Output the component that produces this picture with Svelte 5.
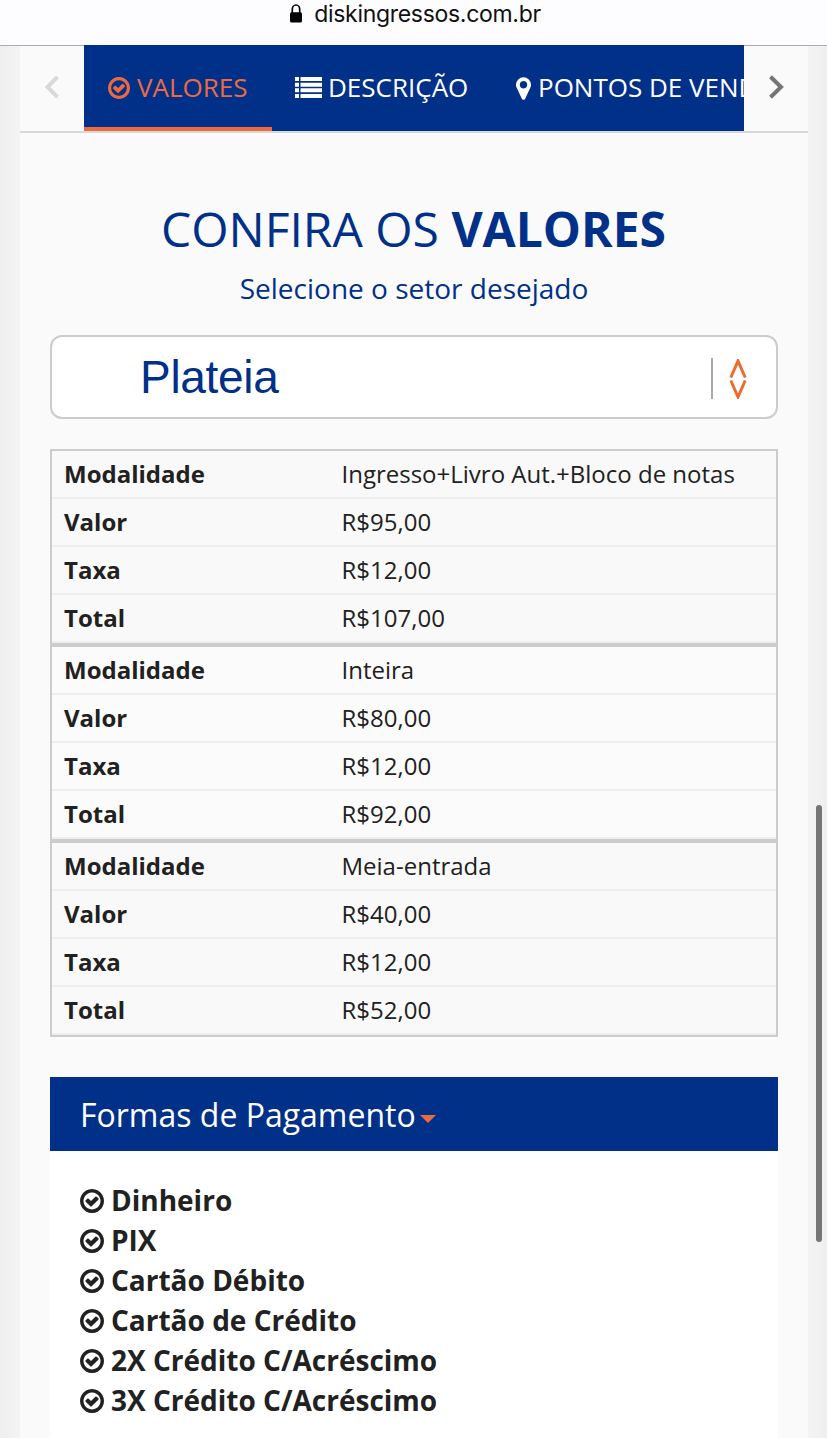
<script lang="ts">
  type Ticket = { modalidade: string; valor: string; taxa: string; total: string };

  const TICKETS: Ticket[] = [
    { modalidade: "Ingresso+Livro Aut.+Bloco de notas", valor: "R$95,00", taxa: "R$12,00", total: "R$107,00" },
    { modalidade: "Inteira", valor: "R$80,00", taxa: "R$12,00", total: "R$92,00" },
    { modalidade: "Meia-entrada", valor: "R$40,00", taxa: "R$12,00", total: "R$52,00" },
  ];

  const PAYMENTS = [
    "Dinheiro",
    "PIX",
    "Cartão Débito",
    "Cartão de Crédito",
    "2X Crédito C/Acréscimo",
    "3X Crédito C/Acréscimo",
  ];

  const rowsOf = (t: Ticket) => [
    { label: "Modalidade", value: t.modalidade },
    { label: "Valor", value: t.valor },
    { label: "Taxa", value: t.taxa },
    { label: "Total", value: t.total },
  ];
</script>

{#snippet check()}
  <svg class="check" viewBox="128 128 1536 1536" aria-hidden="true">
    <path
      d="M1299 813l-422 422q-19 19-45 19t-45-19l-294-294q-19-19-19-45t19-45l102-102q19-19 45-19t45 19l147 147 275-275q19-19 45-19t45 19l102 102q19 19 19 45t-19 45zm141 83q0-148-73-273t-198-198-273-73-273 73-198 198-73 273 73 273 198 198 273 73 273-73 198-198 73-273zm224 0q0 209-103 385.5t-279.5 279.5-385.5 103-385.5-103-279.5-279.5-103-385.5 103-385.5 279.5-279.5 385.5-103 385.5 103 279.5 279.5 103 385.5z"
    />
  </svg>
{/snippet}

<div class="screen">
  <header class="address">
    <svg width="12" height="19" viewBox="0 0 12 19" aria-hidden="true">
      <path d="M2.3 9V5.2a3.7 4.2 0 0 1 7.4 0V9" fill="none" stroke="#050505" stroke-width="1.7" />
      <rect x="0" y="8.2" width="12" height="10.3" rx="1.5" fill="#050505" />
    </svg>
    <span>diskingressos.com.br</span>
  </header>

  <main class="page">
    <nav class="tabs">
      <button class="arrow disabled" aria-label="Anterior">
        <svg width="16" height="26" viewBox="0 0 16 26"><path d="M13.5 2.8 L3.5 13 L13.5 23.2" /></svg>
      </button>
      <div class="strip">
        <a class="tab active" href="#valores">{@render check()}<span>VALORES</span></a>
        <a class="tab descricao" href="#descricao">
          <svg class="list" width="27" height="21" viewBox="0 0 27 21" aria-hidden="true">
            <path d="M0 0h4v4H0zM5.5 0H27v4H5.5zM0 5.7h4v4H0zM5.5 5.7H27v4H5.5zM0 11.3h4v4H0zM5.5 11.3H27v4H5.5zM0 17h4v4H0zM5.5 17H27v4H5.5z" />
          </svg>
          <span>DESCRIÇÃO</span>
        </a>
        <a class="tab pontos" href="#pontos">
          <svg width="15" height="23" viewBox="0 0 1024 1536" aria-hidden="true">
            <path d="M768 512q0-106-75-181t-181-75-181 75-75 181 75 181 181 75 181-75 75-181zm256 0q0 109-33 179l-364 774q-16 33-47.5 52t-67.5 19-67.5-19-46.5-52l-365-774q-33-70-33-179 0-212 150-362t362-150 362 150 150 362z" />
          </svg>
          <span>PONTOS DE VENDA</span>
        </a>
      </div>
      <button class="arrow" aria-label="Próximo">
        <svg width="16" height="26" viewBox="0 0 16 26"><path d="M2.5 2.8 L13 13 L2.5 23.2" /></svg>
      </button>
    </nav>

    <h2><span>CONFIRA OS</span> <strong>VALORES</strong></h2>
    <p class="subtitle"><span>Selecione o setor desejado</span></p>

    <div class="select">
      <span class="selected">Plateia</span>
      <span class="divider"></span>
      <svg width="18" height="40" viewBox="0 0 18 40" aria-hidden="true">
        <path d="M1.8 18.5L9 2L16.2 18.5M1.8 21.5L9 38L16.2 21.5" />
      </svg>
    </div>

    <div class="tickets">
      {#each TICKETS as ticket (ticket.modalidade)}
        <dl class="ticket">
          {#each rowsOf(ticket) as row (row.label)}
            <div class="row">
              <dt>{row.label}</dt>
              <dd>{row.value}</dd>
            </div>
          {/each}
        </dl>
      {/each}
    </div>

    <section class="payment">
      <h3><span>Formas de Pagamento</span><i class="caret"></i></h3>
      <ul>
        {#each PAYMENTS as payment (payment)}
          <li>{@render check()}<span>{payment}</span></li>
        {/each}
      </ul>
    </section>
  </main>
  <div class="scrollbar"></div>
</div>

<style>
  :global(body) {
    background: #fafafa;
  }

  .screen {
    position: relative;
    box-sizing: border-box;
    width: 827px;
    height: 1438px;
    overflow: hidden;
    font-family: "Open Sans", sans-serif;
    color: #212121;
    background: linear-gradient(90deg, #efefef 0, #f4f4f4 20px, #f4f4f4 808px, #efefef 827px);
  }

  .address {
    box-sizing: border-box;
    display: flex;
    justify-content: center;
    align-items: flex-start;
    gap: 12px;
    height: 46px;
    padding-top: 4px;
    padding-left: 4px;
    border-bottom: 1px solid #a9abb0;
    background: #fdfdff;
    font-family: Inter, sans-serif;
    font-size: 23px;
    letter-spacing: -0.3px;
    line-height: 21px;
    color: #101010;
  }

  .page {
    box-sizing: border-box;
    width: 788px;
    height: 1393px;
    margin: -1px 0 0 20px;
    background: #fafafa;
  }

  .tabs {
    display: flex;
    height: 86px;
    border-bottom: 2px solid #d8d8d8;
  }

  .arrow {
    box-sizing: border-box;
    display: flex;
    flex: none;
    align-items: center;
    justify-content: center;
    width: 64px;
    padding: 0 0 4px;
    border: 0;
    border-top: 1px solid #a9abb0;
    background: #fafafa;
  }

  .arrow path {
    fill: none;
    stroke: #757575;
    stroke-width: 4;
  }

  .arrow.disabled path {
    stroke: #d9d9d9;
  }

  .strip {
    display: flex;
    width: 660px;
    overflow: hidden;
    background: #003087;
  }

  .tab {
    box-sizing: border-box;
    display: flex;
    flex: none;
    align-items: center;
    height: 86px;
    padding: 0 24px;
    font-size: 26px;
    color: #fff;
    white-space: nowrap;
    text-decoration: none;
  }

  .tab span {
    margin-top: -2px;
  }

  .tab svg {
    flex: none;
    fill: currentColor;
  }

  .tab .check {
    width: 22px;
    height: 22px;
  }

  .active {
    gap: 7px;
    width: 188px;
    border-bottom: 4px solid #ec6a40;
    padding-top: 4px;
    color: #ec6a40;
  }

  .descricao {
    gap: 6px;
    width: 220px;
    padding-left: 23px;
  }

  .list {
    margin-top: -1px;
  }

  .pontos {
    gap: 7px;
  }

  .pontos svg {
    margin-top: 1px;
  }

  h2 {
    margin: 61px 1px 0 0;
    font-size: 48px;
    font-weight: 400;
    line-height: 70px;
    text-align: center;
    color: #003087;
  }

  h2 strong {
    font-weight: 700;
  }

  .subtitle {
    margin: 4px 0 0;
    font-size: 28px;
    line-height: 40px;
    text-align: center;
    color: #003087;
  }

  .select {
    box-sizing: border-box;
    display: flex;
    align-items: center;
    height: 84px;
    margin: 27px 30px 0;
    padding: 0 29px 0 88px;
    border: 2px solid #ccc;
    border-radius: 12px;
    background: #fff;
  }

  .selected {
    flex: 1;
    font-family: "Liberation Sans", Arial, sans-serif;
    font-size: 46px;
    letter-spacing: -0.3px;
    color: #003087;
  }

  .divider {
    width: 2px;
    height: 41px;
    margin: 3px 16px 0 0;
    background: #aaa;
  }

  .select svg {
    margin-top: 3px;
  }

  .select path {
    fill: none;
    stroke: #ec6b2d;
    stroke-width: 3;
  }

  .tickets {
    margin: 30px 30px 0;
    border: 2px solid #ccc;
  }

  .ticket {
    margin: 0;
    background: #f9f9f9;
  }

  .ticket + .ticket {
    border-top: 4px solid #ccc;
  }

  .ticket:nth-child(2) {
    background: #fbfbfb;
  }

  .row {
    box-sizing: border-box;
    display: grid;
    grid-template-columns: 277.5px 1fr;
    height: 48px;
    padding-left: 12px;
    border-bottom: 2px solid #eee;
    font-size: 24px;
    line-height: 45px;
    white-space: nowrap;
  }

  dt {
    font-weight: 700;
  }

  dd {
    margin: 0;
  }

  .payment {
    height: 361px;
    margin: 40px 30px 0;
    background: #fff;
  }

  h3 {
    display: flex;
    align-items: center;
    gap: 4px;
    height: 74px;
    margin: 0;
    padding: 1px 30px 0;
    box-sizing: border-box;
    background: #003087;
    font-size: 32px;
    font-weight: 400;
    color: #fff;
  }

  .caret {
    margin-top: 9px;
    border: 8px solid transparent;
    border-top-color: #ec6a40;
    border-bottom: 0;
  }

  ul {
    margin: 0;
    padding: 30px;
    list-style: none;
  }

  li {
    display: flex;
    align-items: center;
    gap: 7px;
    height: 40px;
    font-size: 28px;
    font-weight: 700;
    line-height: 38px;
  }

  li span {
    margin-top: -2px;
  }

  li .check {
    flex: none;
    width: 24px;
    height: 24px;
    fill: #212121;
  }

  .scrollbar {
    position: absolute;
    top: 805px;
    left: 816px;
    width: 6px;
    height: 437px;
    border-radius: 3px;
    background: #757575;
  }
</style>
